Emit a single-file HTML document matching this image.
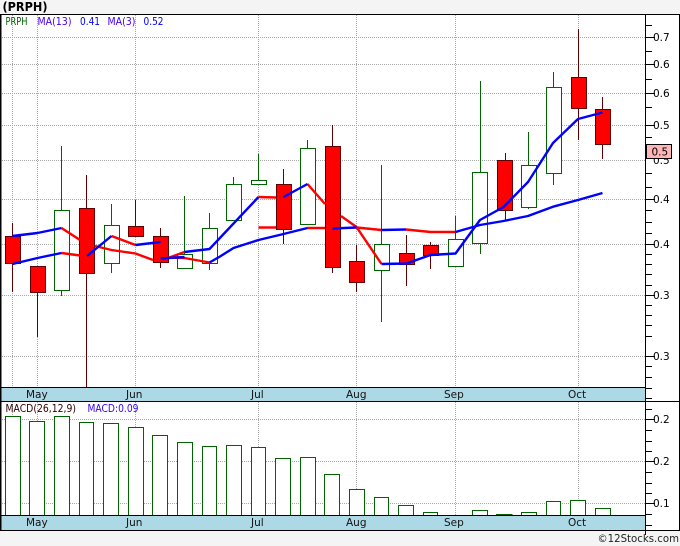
<!DOCTYPE html>
<html>
<head>
<meta charset="utf-8">
<style>
html,body{margin:0;padding:0;background:#f4f4f4;width:680px;height:546px;overflow:hidden}
svg{display:block}
text{font-family:"DejaVu Sans","Liberation Sans",sans-serif;font-size:10.5px}
.s{font-size:10.5px}
</style>
</head>
<body>
<svg width="680" height="546" viewBox="0 0 680 546" xmlns="http://www.w3.org/2000/svg">
<rect x="0" y="14" width="680" height="517" fill="#fff"/>
<text x="2.5" y="11" style="font-size:12px;font-weight:bold" fill="#000" textLength="45" lengthAdjust="spacingAndGlyphs">(PRPH)</text>
<g stroke="#a8a8a8" stroke-width="1" stroke-dasharray="1 1" fill="none">
<path d="M2 37.5H646M2 64.5H646M2 93.5H646M2 125.5H646M2 160.5H646M2 199.5H646M2 244.5H646M2 295.5H646M2 356.5H646"/>
<path d="M12.5 15V387M37.5 15V387M135.5 15V387M258.5 15V387M356.5 15V387M455.5 15V387M578.5 15V387"/>
<path d="M2 419.5H646M2 461.5H646M2 503.5H646"/>
<path d="M12.5 402V515M37.5 402V515M135.5 402V515M258.5 402V515M356.5 402V515M455.5 402V515M578.5 402V515"/>
</g>
<rect x="1" y="387.5" width="645" height="14" fill="#add8e6"/>
<rect x="1" y="515.5" width="645" height="14.5" fill="#add8e6"/>
<g fill="#fff" stroke="#006400" stroke-width="1">
<path d="M61.5 146V296M111.5 204V273M184.5 196V268M209.5 213V270M233.5 177V220M258.5 154V184M307.5 140V224M381.5 165V322M455.5 216V267M480.5 81V254M528.5 132V209M553.5 72V185" fill="none"/>
<rect x="54.5" y="210.5" width="15" height="80"/>
<rect x="104.5" y="225.5" width="15" height="38"/>
<rect x="177.5" y="254.5" width="15" height="14"/>
<rect x="202.5" y="228.5" width="15" height="35"/>
<rect x="226.5" y="184.5" width="15" height="36"/>
<rect x="251.5" y="180.5" width="15" height="4"/>
<rect x="300.5" y="148.5" width="15" height="76"/>
<rect x="374.5" y="244.5" width="15" height="26"/>
<rect x="448.5" y="239.5" width="15" height="27"/>
<rect x="472.5" y="172.5" width="15" height="71"/>
<rect x="521.5" y="165.5" width="15" height="42"/>
<rect x="546.5" y="87.5" width="15" height="86"/>
</g>
<g fill="#f00" stroke="#600000" stroke-width="1">
<path d="M12.5 223V292M37.5 266V337M86.5 175V387M135.5 200V236M160.5 228V268M283.5 169V244M332.5 125V273M356.5 245V292M406.5 235V286M430.5 242V269M505.5 153V221M578.5 29V140M602.5 97V159" fill="none"/>
<rect x="5.5" y="236.5" width="15" height="27"/>
<rect x="30.5" y="266.5" width="15" height="26"/>
<rect x="79.5" y="208.5" width="15" height="65"/>
<rect x="128.5" y="226.5" width="15" height="10"/>
<rect x="153.5" y="236.5" width="15" height="26"/>
<rect x="276.5" y="184.5" width="15" height="45"/>
<rect x="325.5" y="146.5" width="15" height="121"/>
<rect x="349.5" y="261.5" width="15" height="21"/>
<rect x="399.5" y="253.5" width="15" height="11"/>
<rect x="423.5" y="245.5" width="15" height="10"/>
<rect x="497.5" y="160.5" width="15" height="50"/>
<rect x="571.5" y="77.5" width="15" height="31"/>
<rect x="595.5" y="109.5" width="15" height="35"/>
</g>
<g fill="none" stroke-width="2.4" stroke-linejoin="round">
<path stroke="#f00" d="M61.5 228L80 240M61.5 253L80 255.5M95 246L111.5 250L135.5 253.5L153 260M111.5 236L135.5 245M168 258L184.5 252M168 257.5L184.5 258L209.5 262.5M258.5 197L276 197.5M258.5 227.5H276M307.5 184L325 204M307.5 228H325M341 216L356.5 227L381.5 264M356.5 227.5L381.5 230M406 229.5L430.5 232L455.5 232"/>
<path stroke="#00f" d="M12.5 236L37.5 233L61.5 228M12.5 264L37.5 258L61.5 253M87 256L111.5 236M135.5 245L160.5 242M160.5 258.5L184.5 257M184.5 252L209.5 249L258.5 197M209.5 262.5L220 256.5L233.5 248L258.5 240L283.5 234L307.5 228M283.5 197L307.5 184M332.5 228.5L356.5 227.5M381.5 230L406 229.5M381.5 264L406.5 263.5L430.5 255L455.5 253.5L480 220L503.5 207L528 182L553 143L578 119L602.5 112.5M455.5 232L480 225L503.5 221L528 216L553 206.7L578 200L602.5 193"/>
</g>
<g fill="#fff" stroke="#006400" stroke-width="1">
<path d="M5.5 515.5V416.5H20.5V515.5"/>
<path d="M29.5 515.5V421.5H44.5V515.5"/>
<path d="M54.5 515.5V416.5H69.5V515.5"/>
<path d="M79.5 515.5V422.5H93.5V515.5"/>
<path d="M103.5 515.5V423.5H118.5V515.5"/>
<path d="M128.5 515.5V427.5H143.5V515.5"/>
<path d="M152.5 515.5V435.5H167.5V515.5"/>
<path d="M177.5 515.5V442.5H192.5V515.5"/>
<path d="M202.5 515.5V446.5H216.5V515.5"/>
<path d="M226.5 515.5V445.5H241.5V515.5"/>
<path d="M251.5 515.5V447.5H265.5V515.5"/>
<path d="M275.5 515.5V458.5H290.5V515.5"/>
<path d="M300.5 515.5V457.5H315.5V515.5"/>
<path d="M324.5 515.5V474.5H339.5V515.5"/>
<path d="M349.5 515.5V489.5H364.5V515.5"/>
<path d="M374.5 515.5V497.5H388.5V515.5"/>
<path d="M398.5 515.5V505.5H413.5V515.5"/>
<path d="M423.5 515.5V512.5H437.5V515.5"/>
<path d="M472.5 515.5V510.5H487.5V515.5"/>
<path d="M496.5 515.5V514.5H512V515.5"/>
<path d="M521.5 515.5V512.5H536.5V515.5"/>
<path d="M546.5 515.5V501.5H560.5V515.5"/>
<path d="M570.5 515.5V500.5H585.5V515.5"/>
<path d="M595.5 515.5V508.5H610.5V515.5"/>
</g>
<g stroke="#000" stroke-width="1" fill="none">
<path d="M646 25.5H652M646 37.5H655M646 51.5H652M646 64.5H655M646 79.5H652M646 93.5H655M646 107.5H652M646 125.5H655M646 137.5H652M646 173.5H652M646 187.5H652M646 199.5H655M646 210.5H652M646 222.5H652M646 233.5H652M646 244.5H655M646 254.5H652M646 264.5H652M646 274.5H652M646 285.5H652M646 295.5H655M646 305.5H652M646 315.5H652M646 325.5H652M646 336.5H652M646 356.5H655M646 366.5H652M646 377.5H652M646 388.5H652M646 398.5H652M646 409.5H652M646 419.5H655M646 430.5H652M646 441.5H652M646 451.5H652M646 461.5H655M646 472.5H652M646 483.5H652M646 493.5H652M646 503.5H655M646 514.5H652M646 525.5H652"/>
<path d="M0 14.5H680M0 387.5H646M0 401.5H680M0 515.5H646M0 530.5H680M645.5 14V535M679.5 14V531"/>
<path d="M0.5 14V531" stroke-width="2"/>
</g>
<g fill="#000">
<text x="653" y="41">0.7</text>
<text x="653" y="68">0.6</text>
<text x="653" y="97">0.6</text>
<text x="653" y="129">0.5</text>
<text x="653" y="164">0.5</text>
<text x="653" y="203">0.4</text>
<text x="653" y="248">0.4</text>
<text x="653" y="299">0.3</text>
<text x="653" y="360">0.3</text>
<text x="653" y="423">0.2</text>
<text x="653" y="465">0.2</text>
<text x="653" y="507">0.1</text>
</g>
<rect x="646.5" y="144.5" width="25" height="14" fill="#ffb6b6" stroke="#000"/>
<text x="651.5" y="155.5" fill="#000">0.5</text>
<text class="s" x="5.5" y="25" fill="#006400" textLength="22" lengthAdjust="spacingAndGlyphs">PRPH</text>
<text class="s" x="37.5" y="25" fill="#4400ff" textLength="34" lengthAdjust="spacingAndGlyphs">MA(13)</text>
<text class="s" x="80" y="25" fill="#0000ff" textLength="20" lengthAdjust="spacingAndGlyphs">0.41</text>
<text class="s" x="107.5" y="25" fill="#4400ff" textLength="28" lengthAdjust="spacingAndGlyphs">MA(3)</text>
<text class="s" x="143.5" y="25" fill="#0000ff" textLength="20" lengthAdjust="spacingAndGlyphs">0.52</text>
<g fill="#111">
<text x="26" y="398">May</text>
<text x="126" y="398">Jun</text>
<text x="251" y="398">Jul</text>
<text x="346" y="398">Aug</text>
<text x="444" y="398">Sep</text>
<text x="568" y="398">Oct</text>
<text x="26" y="526">May</text>
<text x="126" y="526">Jun</text>
<text x="251" y="526">Jul</text>
<text x="346" y="526">Aug</text>
<text x="444" y="526">Sep</text>
<text x="568" y="526">Oct</text>
</g>
<text class="s" x="5.5" y="412" fill="#300000" textLength="70.5" lengthAdjust="spacingAndGlyphs">MACD(26,12,9)</text>
<text class="s" x="87.5" y="412" fill="#3300ff" textLength="51" lengthAdjust="spacingAndGlyphs">MACD:0.09</text>
<text x="597.5" y="542" fill="#222" style="font-size:11px" textLength="81.5" lengthAdjust="spacingAndGlyphs">©12Stocks.com</text>
</svg>
</body>
</html>
